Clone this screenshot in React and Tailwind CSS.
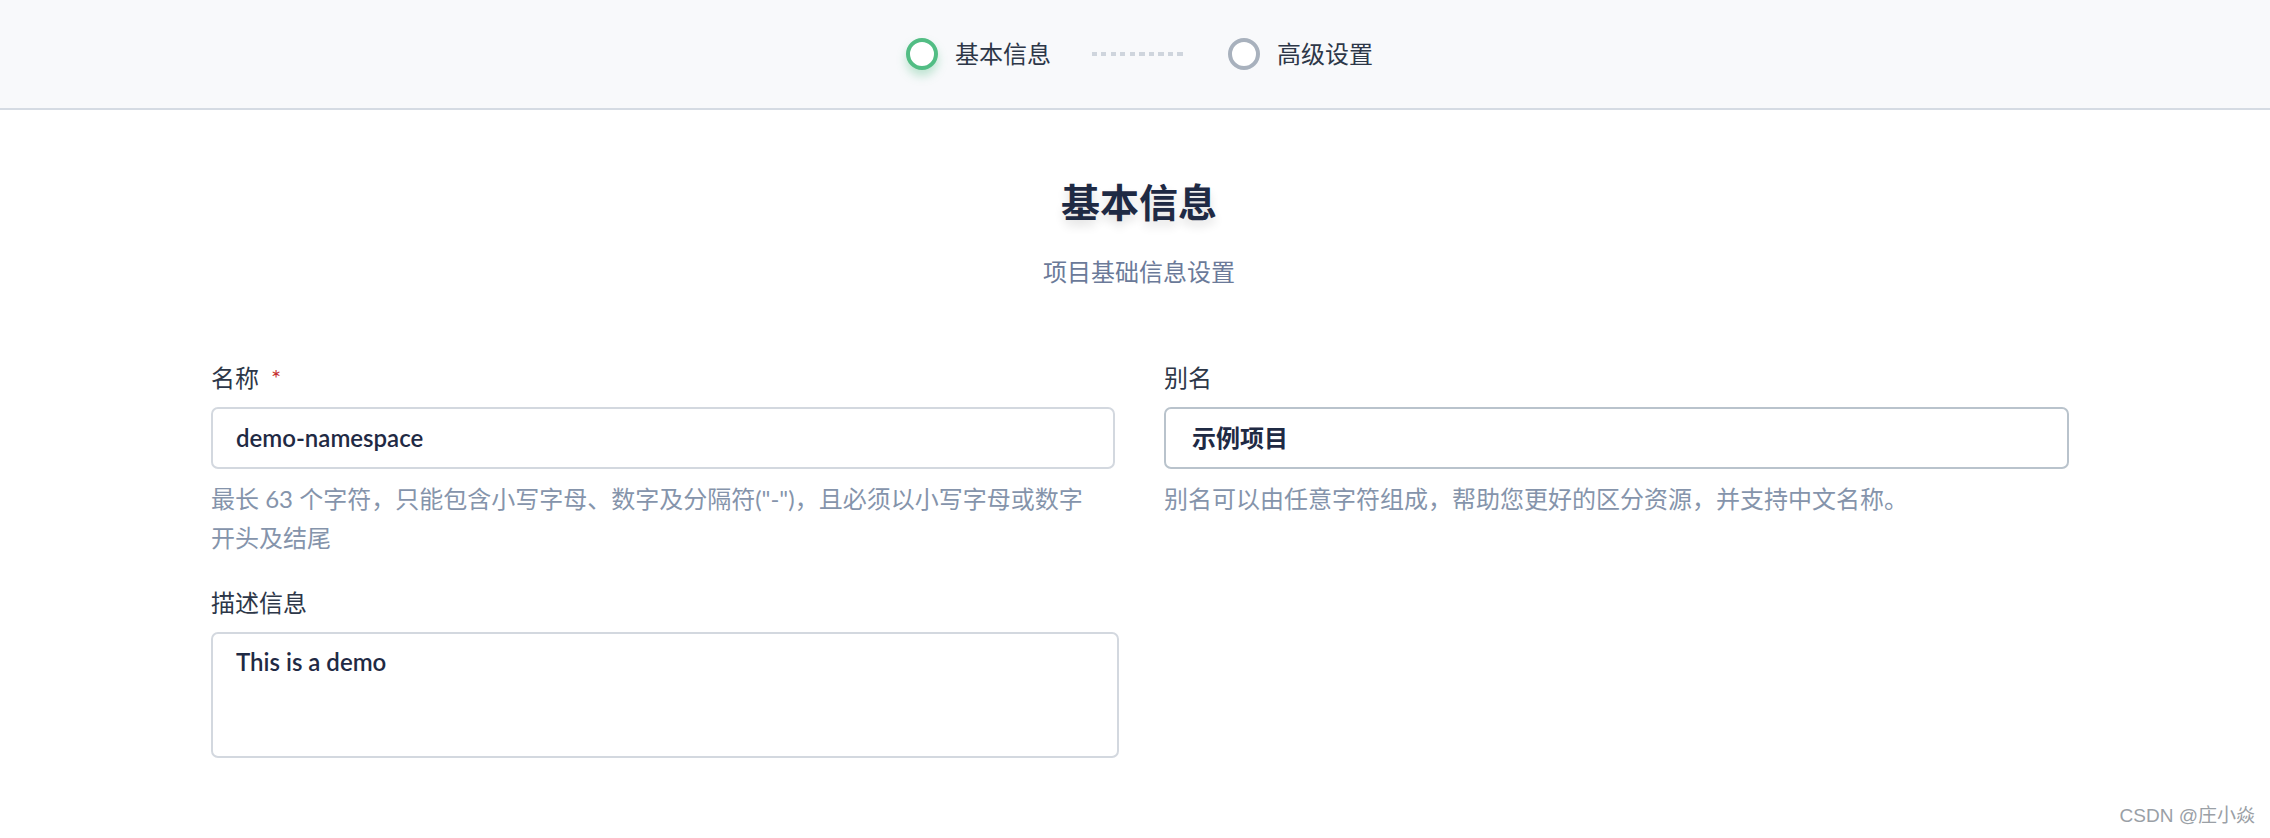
const font = { fontFamily: '"Lato", "Noto Sans CJK SC", sans-serif' };

function Step({ label, active }) {
  return (
    <div className="flex items-center gap-[17px]">
      <span
        className={`h-[32px] w-[32px] rounded-full border-[4px] bg-white ${
          active
            ? 'border-[#52bd84] shadow-[0_6px_10px_rgba(82,189,132,0.35)]'
            : 'border-[#a8b1bd]'
        }`}
      />
      <span className="text-[24px] leading-none text-[#2d3748]">{label}</span>
    </div>
  );
}

export default function App() {
  return (
    <div className="min-h-[838px] w-[2270px] bg-white relative" style={font}>
      {/* Steps header */}
      <div className="flex h-[110px] items-center justify-center border-b-2 border-[#d5dbe3] bg-[#f8f9fb] pl-[9px]">
        <Step label="基本信息" active />
        <div className="mx-[41px] h-[4px] w-[95px] bg-[repeating-linear-gradient(90deg,#cfd5dd_0_5px,transparent_5px_9.5px)]" />
        <Step label="高级设置" />
      </div>

      {/* Title */}
      <div className="flex flex-col items-center pl-[8px] pt-[73px]">
        <h1 className="text-[39px] font-bold leading-none text-[#1f2a44] [text-shadow:0_6px_10px_rgba(0,0,0,0.12)]">
          基本信息
        </h1>
        <p className="mt-[38px] text-[24px] leading-none text-[#6b7a99]">项目基础信息设置</p>
      </div>

      {/* Form */}
      <div className="grid w-[2069px] grid-cols-[904px_905px] gap-x-[49px] pl-[211px] pt-[82px] text-[24px]">
        <div>
          <label className="flex items-center leading-none text-[#2d3748]">
            名称 <span className="ml-[12px] text-[#c53030]">*</span>
          </label>
          <div className="mt-[17px] flex h-[62px] items-center rounded-[7px] border-2 border-[#d3d8df] px-[23px] font-semibold text-[#1f2a44]">
            demo-namespace
          </div>
          <p className="mt-[10px] leading-[39px] text-[#8594ab]">
            最长 63 个字符，只能包含小写字母、数字及分隔符("-")，且必须以小写字母或数字
            <br />
            开头及结尾
          </p>
        </div>
        <div>
          <label className="block leading-none text-[#2d3748]">别名</label>
          <div className="mt-[17px] flex h-[62px] items-center rounded-[7px] border-2 border-[#b9c3cc] px-[26px] font-semibold text-[#1f2a44]">
            示例项目
          </div>
          <p className="mt-[10px] leading-[39px] text-[#8594ab]">
            别名可以由任意字符组成，帮助您更好的区分资源，并支持中文名称。
          </p>
        </div>
        <div className="mt-[34px] w-[908px]">
          <label className="block leading-none text-[#2d3748]">描述信息</label>
          <div className="mt-[17px] h-[126px] rounded-[7px] border-2 border-[#d3d8df] px-[23px] pt-[10px] leading-[36px] font-semibold text-[#1f2a44]">
            This is a demo
          </div>
        </div>
      </div>

      <span className="absolute bottom-[8px] right-[15px] text-[19px] text-[#9aa0a6]" style={{ fontFamily: '"Liberation Sans", "Noto Sans CJK SC", sans-serif' }}>
        CSDN @庄小焱
      </span>
    </div>
  );
}
